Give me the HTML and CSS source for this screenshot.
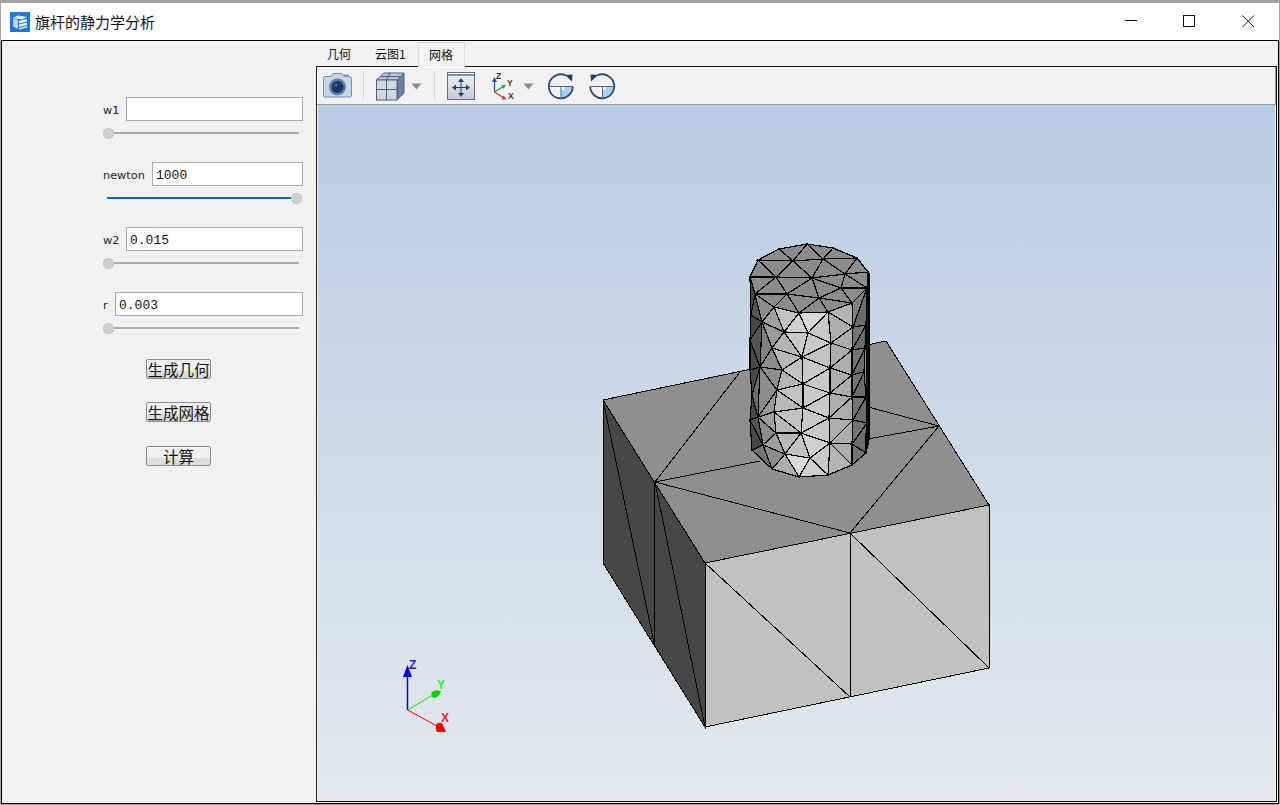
FILE: index.html
```html
<!DOCTYPE html>
<html lang="zh">
<head>
<meta charset="utf-8">
<title>旗杆的静力学分析</title>
<link rel="stylesheet" href="styles.css">
</head>
<body>
<div class="window">
  <header class="titlebar">
    <svg class="logo" viewBox="0 0 20 20">
      <rect class="logo-bg" width="20" height="20"/>
      <path class="logo-a" d="M3 6 8 3.5 17 5 12 7.5Z"/>
      <path class="logo-b" d="M3 6 8 8V17L3 14.5Z"/>
      <path class="logo-a" d="M9 9 17 7V9.5L9 11.5ZM9 12.5 17 10.5V13L9 15ZM9 16 17 14V15.5L9 17.5Z"/>
    </svg>
    <span class="title">旗杆的静力学分析</span>
    <div class="winbtns">
      <svg class="winbtn" viewBox="0 0 13 13"><path class="wstroke" d="M1 5.5H13"/></svg>
      <svg class="winbtn" viewBox="0 0 13 13"><rect class="wstroke" x="0.5" y="0.5" width="11" height="11"/></svg>
      <svg class="winbtn" viewBox="0 0 13 13"><path class="wstroke" d="M0.5 0.5 12 12M12 0.5 0.5 12"/></svg>
    </div>
  </header>
  <main class="main">
    <aside class="panel">
      <div class="field">
        <div class="row"><label class="lab lab-w">w1</label><input class="num" type="text" value=""></div>
        <div class="slider"><span class="handle"></span><span class="track"></span></div>
      </div>
      <div class="field">
        <div class="row"><label class="lab lab-n">newton</label><input class="num" type="text" value="1000"></div>
        <div class="slider slider-max"><span class="track track-on"></span><span class="handle"></span></div>
      </div>
      <div class="field">
        <div class="row"><label class="lab lab-w">w2</label><input class="num" type="text" value="0.015"></div>
        <div class="slider"><span class="handle"></span><span class="track"></span></div>
      </div>
      <div class="field">
        <div class="row"><label class="lab lab-r">r</label><input class="num" type="text" value="0.003"></div>
        <div class="slider"><span class="handle"></span><span class="track"></span></div>
      </div>
      <div class="actions">
        <button class="btn">生成几何</button>
        <button class="btn">生成网格</button>
        <button class="btn btn-last">计算</button>
      </div>
    </aside>
    <section class="pane">
      <nav class="tabs">
        <span class="tab tab-a">几何</span>
        <span class="tab tab-b">云图1</span>
        <span class="tab tab-a tab-on">网格</span>
      </nav>
      <div class="frame">
        <div class="toolbar">
          <svg class="ic cam" viewBox="323 67 30 37">
            <path class="cam-body" d="M325 76.5H331L333 73.5H342L344 76.5H349.5Q351.5 76.5 351.5 78.5V95Q351.5 97 349.5 97H325Q323.5 97 323.5 95V78.5Q323.5 76.5 325 76.5Z"/>
            <rect class="cam-top" x="344" y="74.5" width="5" height="2"/>
            <circle class="cam-ring" cx="337.5" cy="87" r="8.5"/>
            <circle class="cam-lens" cx="337.5" cy="87" r="6"/>
            <circle class="cam-glint" cx="336" cy="85" r="1.5"/>
          </svg>
          <span class="sep"></span>
          <svg class="ic cube" viewBox="376 67 29 37">
            <path class="cube-side" d="M397 80 404 73V93L397 100Z"/>
            <path class="cube-top" d="M376.5 80 384 73H404L397 80Z"/>
            <rect class="cube-face" x="376.5" y="80" width="20.5" height="20"/>
            <path class="cube-line" d="M376.5 89.5H397M386.5 80V100M380 76.5H400.5M390 73 386.5 80"/>
          </svg>
          <svg class="ic drop" viewBox="411 67 11 37"><path class="drop-a" d="M411.5 83.5H421.5L416.5 89.5Z"/></svg>
          <span class="sep"></span>
          <svg class="ic fit" viewBox="447 67 29 37">
            <defs><linearGradient id="fitg" x1="0" y1="0" x2="0" y2="1"><stop offset="0" stop-color="#f4f4f7"/><stop offset="1" stop-color="#c3c8d4"/></linearGradient></defs>
            <rect class="fit-box" x="447.5" y="72.5" width="27" height="27" fill="url(#fitg)"/>
            <path class="fit-bar" d="M447.5 75H474.5"/>
            <path class="fit-line" d="M461 79.5V95M453 87.5H469"/>
            <path class="fit-head" d="M461 78 464 82H458ZM461 97 464 93H458ZM452 87.5 456 84.5V90.5ZM470 87.5 466 84.5V90.5Z"/>
          </svg>
          <svg class="ic axes" viewBox="492 67 25 37">
            <path class="ax-z" d="M494.5 92V80"/><path class="ax-zh" d="M494.5 77 497 82H492Z"/>
            <path class="ax-y" d="M494.5 92 504 86"/><path class="ax-yh" d="M506 84.5 503.5 89 501.5 85.5Z"/>
            <path class="ax-x" d="M494.5 92 504 98"/><path class="ax-xh" d="M506.5 99.5 501.5 99.5 503.5 95.5Z"/>
            <text class="ax-t" x="496" y="79">Z</text><text class="ax-t" x="507" y="86">Y</text><text class="ax-t" x="508" y="99">X</text>
          </svg>
          <svg class="ic drop" viewBox="523 67 11 37"><path class="drop-a" d="M523.5 83.5H533.5L528.5 89.5Z"/></svg>
          <svg class="ic rot" viewBox="548 67 27 37">
            <path class="rot-q" d="M561 86.5H573Q573 93 568 96T561 98.5Z"/>
            <rect class="rot-w" x="561.5" y="87" width="3" height="3"/>
            <path class="rot-l" d="M566 75.5A12 12 0 1 0 572.8 86.5"/>
            <path class="rot-i" d="M549 86.5H573M561 86.5V98.5"/>
            <path class="rot-h" d="M565 75 572.5 74.5 572 81.5Z"/>
          </svg>
          <svg class="ic rot" viewBox="589 67 27 37">
            <path class="rot-q" d="M602.5 86.5H614Q614 93 610 96T602.5 98.5Z"/>
            <rect class="rot-w" x="602.5" y="87" width="3" height="3"/>
            <path class="rot-l" d="M597 75.5A12 12 0 1 1 590.2 86.5"/>
            <path class="rot-i" d="M590 86.5H614M602.5 86.5V98.5"/>
            <path class="rot-h" d="M598 75 590.5 74.5 591 81.5Z"/>
          </svg>
        </div>
        <div class="view">
          <svg class="scene" viewBox="318 105 957 696">
            <g class="mesh thin">
              <polygon class="gtop" points="603,400 886,341 989,505 705,563"/>
              <path d="M655,482 740,372M655,482 760,461M655,482 850,533M850,533 939,426M939,426 868,407M939,426 868,439"/>
              <polygon class="gleft" points="603,400 705,563 705,727 603,563"/>
              <path d="M654.5,482V645M603,400 654.5,645M655,482 705,727"/>
              <polygon class="gright" points="705,563 989,505 989,668 705,727"/>
              <path d="M850.5,533V697M705,563 850,697M850,533 989,668"/>
            </g>
            <g class="mesh cyl">
              <polygon class="g8c" points="750,277 758,260 779,249 807,244 833,248 857,258 868,272 867,288 852,303 828,312 799,313 774,307 755,294"/>
              <polygon class="fn" points="758,260 779,249 793,261"/><polygon class="fn" points="779,249 807,244 793,261"/><polygon class="fn" points="807,244 793,261 823,259"/><polygon class="fn" points="807,244 833,248 823,259"/><polygon class="fn" points="833,248 857,258 823,259"/><polygon class="fn" points="823,259 857,258 845,274"/><polygon class="fn" points="857,258 868,272 845,274"/><polygon class="fn" points="758,260 793,261 776,277"/><polygon class="fn" points="793,261 812,278 776,277"/><polygon class="fn" points="793,261 823,259 812,278"/><polygon class="fn" points="823,259 845,274 812,278"/><polygon class="fn" points="758,260 750,277 776,277"/><polygon class="fn" points="750,277 755,294 776,277"/><polygon class="fn" points="755,294 776,277 787,294"/><polygon class="fn" points="776,277 812,278 787,294"/><polygon class="fn" points="812,278 787,294 819,298"/><polygon class="fn" points="812,278 841,288 819,298"/><polygon class="fn" points="812,278 845,274 841,288"/><polygon class="fn" points="845,274 867,288 841,288"/><polygon class="fn" points="845,274 868,272 867,288"/><polygon class="fn" points="841,288 867,288 852,303"/><polygon class="fn" points="841,288 852,303 819,298"/><polygon class="fn" points="755,294 787,294 774,307"/><polygon class="fn" points="787,294 774,307 799,313"/><polygon class="fn" points="787,294 799,313 819,298"/><polygon class="fn" points="819,298 799,313 828,312"/><polygon class="fn" points="819,298 828,312 852,303"/>

              <polygon class="gc4" points="774,307 799,313 784,332"/><polygon class="gdc" points="799,313 828,312 808,333"/><polygon class="gd4" points="799,313 784,332 808,333"/><polygon class="gcc" points="828,312 808,333 831,343"/><polygon class="gb4" points="828,312 852,303 853,327"/><polygon class="gad" points="828,312 853,327 831,343"/><polygon class="ga0" points="774,307 784,332 762,322"/><polygon class="g8c" points="755,294 774,307 762,322"/><polygon class="gcc" points="784,332 808,333 802,357"/><polygon class="gcc" points="808,333 831,343 802,357"/><polygon class="gc4" points="831,343 802,357 830,368"/><polygon class="gad" points="831,343 853,327 852,350"/><polygon class="gad" points="831,343 852,350 830,368"/><polygon class="gad" points="830,368 852,350 852,375"/><polygon class="g99" points="762,322 784,332 772,348"/><polygon class="gb4" points="784,332 772,348 802,357"/><polygon class="gbb" points="772,348 802,357 782,370"/><polygon class="gc4" points="802,357 782,370 803,384"/><polygon class="gcc" points="802,357 830,368 803,384"/><polygon class="g80" points="762,322 772,348 760,367"/><polygon class="g8c" points="772,348 760,367 782,370"/><polygon class="g8c" points="760,367 782,370 777,390"/><polygon class="gb4" points="782,370 803,384 777,390"/><polygon class="gc4" points="803,384 777,390 803,408"/><polygon class="gcc" points="803,384 830,393 803,408"/><polygon class="gcc" points="830,368 803,384 830,393"/><polygon class="gad" points="830,368 852,375 830,393"/><polygon class="gad" points="852,375 830,393 852,397"/><polygon class="gcc" points="830,393 803,408 829,418"/><polygon class="gad" points="830,393 829,418 852,397"/><polygon class="gad" points="829,418 852,397 853,420"/><polygon class="gbb" points="777,390 803,408 774,412"/><polygon class="gc4" points="803,408 774,412 801,433"/><polygon class="gcc" points="803,408 829,418 801,433"/><polygon class="gcc" points="829,418 801,433 830,443"/><polygon class="gad" points="829,418 853,420 830,443"/><polygon class="gad" points="853,420 830,443 852,444"/><polygon class="g8c" points="760,367 777,390 758,417"/><polygon class="g99" points="777,390 774,412 758,417"/><polygon class="ga0" points="774,412 758,417 776,433"/><polygon class="gbb" points="774,412 776,433 801,433"/><polygon class="gbb" points="776,433 801,433 785,454"/><polygon class="gc4" points="801,433 785,454 810,458"/><polygon class="gd4" points="801,433 830,443 810,458"/><polygon class="g8c" points="758,417 776,433 763,445"/><polygon class="ga0" points="776,433 763,445 785,454"/><polygon class="g8c" points="763,445 785,454 772,469"/><polygon class="gad" points="785,454 772,469 799,477"/><polygon class="gdc" points="785,454 810,458 799,477"/><polygon class="gd4" points="810,458 799,477 828,475"/><polygon class="gcc" points="810,458 830,443 828,475"/><polygon class="gb4" points="830,443 828,475 852,465"/><polygon class="gad" points="830,443 852,444 852,465"/><polygon class="g70" points="763,445 752,450 772,469"/>

              <polygon class="g80" points="852,303 867,288 853,327"/><polygon class="g6c" points="867,288 866,325 853,327"/><polygon class="g70" points="853,327 866,325 852,350"/><polygon class="g6c" points="866,325 865,348 852,350"/><polygon class="g70" points="852,350 865,348 852,375"/><polygon class="g6c" points="865,348 864,372 852,375"/><polygon class="g70" points="852,375 864,372 852,397"/><polygon class="g6c" points="864,372 866,397 852,397"/><polygon class="g70" points="852,397 866,397 853,420"/><polygon class="g6c" points="866,397 867,423 853,420"/><polygon class="g70" points="853,420 867,423 852,444"/><polygon class="g6c" points="867,423 866,453 852,444"/><polygon class="g70" points="852,444 866,453 852,465"/>
              <polygon class="g22" points="867,288 868,272 869,273 869,440 866,453"/>

              <polygon class="g48" points="750,277 755,294 751,315"/><polygon class="g55" points="755,294 762,322 751,315"/><polygon class="g48" points="762,322 751,315 750,340"/><polygon class="g55" points="762,322 750,340 760,367"/><polygon class="g48" points="750,340 750,370 760,367"/><polygon class="g48" points="750,370 760,367 752,395"/><polygon class="g6c" points="760,367 758,417 752,395"/><polygon class="g48" points="752,395 758,417 750,420"/><polygon class="g55" points="758,417 750,420 763,445"/><polygon class="g48" points="750,420 752,450 763,445"/>
            </g>
            <g class="triad">
              <path class="tz" d="M407.5 710V675"/><path class="tzh" d="M407.5 665 412 677H403Z"/>
              <path class="ty" d="M407.5 710 433 695"/><path class="tyh" d="M431.5 692.5Q436 688.5 441 691.5Q439 697 434 698Q431 697 431.5 692.5Z"/>
              <path class="tx" d="M407.5 710 437 726"/><path class="txh" d="M436.5 724Q441 721 443 725L446 732H437Q435 729 436.5 724Z"/>
              <text class="tl tl-z" x="409" y="669">Z</text>
              <text class="tl tl-y" x="437" y="689">Y</text>
              <text class="tl tl-x" x="441" y="722">X</text>
            </g>
          </svg>
        </div>
      </div>
    </section>
  </main>
</div>
</body>
</html>
```
FILE: styles.css
```css
* { box-sizing: border-box; }
html, body { margin: 0; height: 805px; overflow: hidden; }
body { background: #a3a3a3; padding: 3px 1px 1px 1px; font-family: "Noto Sans CJK SC", "Noto Sans", sans-serif; }
.window { display: flex; flex-direction: column; width: 1278px; height: 801px; }

.titlebar { display: flex; align-items: center; height: 37px; padding-left: 9px; background: #fff; flex: none; }
.logo { width: 20px; height: 20px; display: block; }
.logo-bg { fill: #1a78e6; }
.logo-a { fill: #eaf2fb; }
.logo-b { fill: #b9d5f5; }
.title { margin-left: 5px; font-size: 15px; color: #111; line-height: 20px; }
.winbtns { display: flex; margin-left: auto; margin-right: 24px; gap: 46px; }
.winbtn { width: 13px; height: 13px; display: block; }
.wstroke { fill: none; stroke: #111; stroke-width: 1; }

.main { display: flex; flex: 1; border: 1px solid #000; background: #f1f1f1; min-height: 0; }

.panel { flex: none; width: 314px; padding: 56px 13px 0 101px; display: flex; flex-direction: column; gap: 24px; }
.field { display: flex; flex-direction: column; gap: 7px; }
.row { display: flex; align-items: center; height: 24px; }
.lab { font: 11.3px "DejaVu Sans", sans-serif; color: #222; flex: none; padding-top: 2px; }
.lab-w { width: 23px; }
.lab-n { width: 49px; }
.lab-r { width: 12px; }
.num { flex: 1; min-width: 0; height: 24px; border: 1px solid #a9a9a9; background: #fff; padding: 2px 3px 0; font: 13px "Liberation Mono", monospace; color: #111; outline: none; border-radius: 0; }
.slider { display: flex; align-items: center; height: 10px; width: 196px; }
.slider-max { width: 199px; padding-left: 4px; }
.handle { width: 11px; height: 11px; margin-bottom: -1px; flex: none; border-radius: 50%; background: #cfcfcf; border: 1px dotted #b5b5b5; }
.track { flex: 1; height: 2px; background: #acacac; }
.track-on { background: #1068b8; }

.actions { display: flex; flex-direction: column; gap: 23px; width: 65px; margin: 2px 0 0 43px; }
.btn { width: 65px; height: 20px; padding: 0; border: 1px solid #8c8c8c; border-radius: 2px; background: linear-gradient(#efefef 0, #efefef 62%, #dcdcdc 62%, #dcdcdc 100%); font: 15.5px/18px "Noto Sans CJK SC", sans-serif; color: #111; }
.btn-last { margin-top: 1px; }

.pane { flex: none; width: 962px; display: flex; flex-direction: column; padding: 0 1px 1px 0; }
.tabs { display: flex; gap: 1px; height: 25px; flex: none; align-items: flex-end; font-size: 12px; color: #111; }
.tab { height: 25px; padding: 3px 0 0 11px; line-height: 20px; }
.tab-a { width: 47px; }
.tab-b { width: 53px; }
.tab-on { height: 25px; margin-bottom: -1px; border: 1px solid #dcdcdc; border-bottom: 0; background: #f3f3f3; padding-left: 10px; padding-top: 2px; position: relative; z-index: 1; }

.frame { flex: 1; min-height: 0; display: flex; flex-direction: column; border: 1px solid #111; border-left-color: #222; background: #f1f1f1; }
.toolbar { display: flex; align-items: stretch; height: 38px; flex: none; padding-left: 6px; margin-right: 0; border-right: 1px solid #9a9a9a; border-bottom: 1px solid #9a9a9a; box-shadow: inset 1px 1px 0 #fff; }
.ic { height: 37px; display: block; flex: none; }
.sep { width: 1px; height: 29px; margin: 4px 0 0 10px; background: #d6d6d6; flex: none; }
.cam { width: 30px; }
.cube { width: 29px; margin-left: 12px; }
.toolbar .sep + .fit { margin-left: 12px; }
.drop { width: 11px; margin-left: 6px; }
.fit { width: 29px; }
.axes { width: 25px; margin-left: 16px; }
.rot { width: 27px; margin-left: 14px; }
.drop + .sep { margin-left: 12px; }
.drop-a { fill: #8c8c8c; }

.cam-body { fill: #c9d6e4; stroke: #6f8db3; stroke-width: 1; }
.cam-top { fill: #7f9abb; }
.cam-ring { fill: #5f7fa6; }
.cam-lens { fill: #1c3566; }
.cam-glint { fill: #4a72a8; }
.cube-side { fill: #6f7f98; stroke: #4a6285; }
.cube-top { fill: #bfc8d2; stroke: #4a6285; }
.cube-face { fill: #d4d8dd; stroke: #4a6285; }
.cube-line { fill: none; stroke: #4a6285; stroke-width: 1; }
.fit-box { stroke: #5a7090; stroke-width: 1; }
.fit-bar { stroke: #5a7090; stroke-width: 1.5; fill: none; }
.fit-line { stroke: #23406b; stroke-width: 1; fill: none; }
.fit-head { fill: #23406b; }
.ax-z { stroke: #2a4fa8; stroke-width: 1.3; fill: none; }
.ax-zh { fill: #2a4fa8; }
.ax-y { stroke: #2b9a4c; stroke-width: 1.3; fill: none; }
.ax-yh { fill: #2b9a4c; }
.ax-x { stroke: #d93a34; stroke-width: 1.3; fill: none; }
.ax-xh { fill: #d93a34; }
.ax-t { font: bold 8.5px "Liberation Sans", sans-serif; fill: #333; }
.rot-q { fill: #a5d0ef; }
.rot-w { fill: #f4f9fd; }
.rot-l { fill: none; stroke: #2a4a72; stroke-width: 1.8; }
.rot-i { fill: none; stroke: #4a6a90; stroke-width: 1; }
.rot-h { fill: #1f3d66; }

.view { flex: 1; min-height: 0; margin-left: 1px; border-right: 1px solid #f1f1f1; background: linear-gradient(#b9cde4, #e6e8ec); }
.scene { display: block; width: 957px; height: 696px; }

.mesh { stroke: #000; stroke-width: 1; shape-rendering: crispEdges; stroke-linejoin: miter; }
.cyl { stroke-width: 1.2; }
.thin path { fill: none; }
.fn { fill: none; }
.gtop { fill: #8f8f8f; }
.gleft { fill: #474747; }
.gright { fill: #c1c1c1; }
.g22 { fill: #141414; }
.g48 { fill: #484848; }
.g55 { fill: #555; }
.g6c { fill: #6c6c6c; }
.g70 { fill: #747474; }
.g80 { fill: #808080; }
.g8c { fill: #8c8c8c; }
.g99 { fill: #999; }
.ga0 { fill: #a0a0a0; }
.gad { fill: #adadad; }
.gb4 { fill: #b4b4b4; }
.gbb { fill: #b8b8b8; }
.gc4 { fill: #c2c2c2; }
.gcc { fill: #c9c9c9; }
.gd4 { fill: #d0d0d0; }
.gdc { fill: #d9d9d9; }

.tz { stroke: #0000e0; stroke-width: 1.5; fill: none; }
.tzh { fill: #0000e0; }
.ty { stroke: #10e010; stroke-width: 1; fill: none; }
.tyh { fill: #00d000; }
.tx { stroke: #f00000; stroke-width: 1; fill: none; }
.txh { fill: #f00000; }
.tl { font: bold 12px "Liberation Sans", sans-serif; }
.tl-z { fill: #1a1ae0; }
.tl-y { fill: #20f020; }
.tl-x { fill: #f02020; }
```
